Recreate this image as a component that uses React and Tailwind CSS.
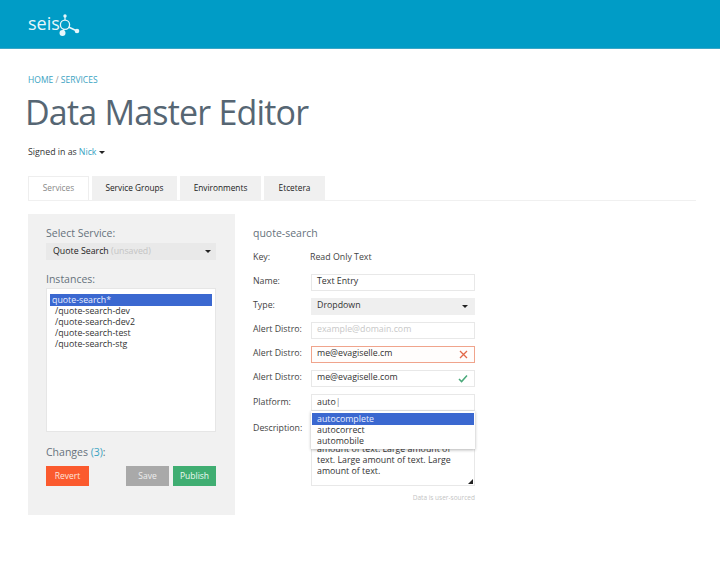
import React from 'react';

const font = { fontFamily: '"Open Sans", sans-serif' };

const Caret = ({ className = '' }) => (
  <span className={`inline-block w-0 h-0 border-x-[3px] border-x-transparent border-t-[3px] border-t-[#222] ${className}`} />
);

const Logo = () => (
  <div className="flex items-center">
    <span className="text-[18px] leading-none text-[#e6f6fb] -mt-[2px]">seis</span>
    <svg width="24" height="24" viewBox="0 0 24 24" className="-ml-[1px]">
      <circle cx="6" cy="12.7" r="4.6" fill="none" stroke="#e6f6fb" strokeWidth="1.3" />
      <line x1="6" y1="4" x2="6" y2="8" stroke="#e6f6fb" strokeWidth="1.2" />
      <line x1="5" y1="17" x2="4" y2="20" stroke="#e6f6fb" strokeWidth="1.4" />
      <line x1="9.5" y1="15" x2="18" y2="19" stroke="#e6f6fb" strokeWidth="1.5" />
      <circle cx="6" cy="4" r="1.7" fill="#e6f6fb" />
      <circle cx="3.5" cy="21" r="3" fill="#e6f6fb" />
      <circle cx="18" cy="19" r="2.3" fill="#e6f6fb" />
    </svg>
  </div>
);

const Tab = ({ children, active, width }) => (
  <div className={`h-[24px] flex items-center justify-center text-[8.3px] ${width} ${active ? 'bg-white text-[#888] border border-b-0 border-[#eee]' : 'bg-[#f0f0f0] text-[#222]'}`}>
    {children}
  </div>
);

const Row = ({ label, height = 'h-[24px]', children }) => (
  <div className={`flex items-center ${height}`}>
    <div className="w-[58px] text-[8.8px] text-[#444]">{label}</div>
    <div className="w-[164px]">{children}</div>
  </div>
);

const Box = ({ children, className = '' }) => (
  <div className={`h-[17px] flex items-center justify-between pl-[5px] pr-[6px] text-[8.8px] text-[#333] border ${className || 'bg-white border-[#e8e8e8]'}`}>
    {children}
  </div>
);

const instances = ['/quote-search-dev', '/quote-search-dev2', '/quote-search-test', '/quote-search-stg'];

export default function App() {
  return (
    <div className="w-[720px] h-[584px] bg-white overflow-hidden" style={font}>
      <header className="h-[49px] bg-[#009cc6] border-b border-[#3aa6c6] flex items-center pl-[28px]">
        <Logo />
      </header>

      <div className="pl-[28px] pr-[24px]">
        <div className="mt-[25px] text-[8.5px] leading-[12px] text-[#3aa3c2]">HOME <span className="text-[#999]">/</span> SERVICES</div>
        <h1 className="mt-[1px] -ml-[3px] text-[34px] leading-[50px] tracking-[-0.8px] text-[#566673] font-normal">Data Master Editor</h1>
        <div className="mt-[9px] text-[8.8px] leading-[12px] text-[#333] flex items-center">
          Signed in as <span className="text-[#3aa3c2] ml-[2px]">Nick</span>
          <Caret className="ml-[2px] border-t-[#3aa3c2]" />
        </div>

        <div className="mt-[18px] flex gap-[3px] border-b border-[#f0f0f0]">
          <Tab active width="w-[61px]">Services</Tab>
          <Tab width="w-[85px]">Service Groups</Tab>
          <Tab width="w-[81px]">Environments</Tab>
          <Tab width="w-[61px]">Etcetera</Tab>
        </div>

        <div className="mt-[13px] flex">
          <aside className="w-[207px] h-[301px] bg-[#f1f1f1] pt-[12px] pl-[18px] pr-[19px]">
            <div className="text-[10.5px] leading-[14px] text-[#66727c]">Select Service:</div>
            <div className="mt-[3px] h-[17px] bg-[#e9e9e9] flex items-center justify-between pl-[7px] pr-[5px] text-[8.8px] text-[#222]">
              <span>Quote Search <span className="text-[#c4c4c4]">(unsaved)</span></span>
              <Caret />
            </div>
            <div className="mt-[12px] text-[10.5px] leading-[14px] text-[#66727c]">Instances:</div>
            <div className="mt-[2px] h-[144px] bg-white border border-[#e6e6e6] pt-[5px] px-[3px] text-[8.8px] leading-[11px] text-[#333]">
              <div className="h-[12px] bg-[#3b68d0] text-[#e8eeff] leading-[12px] pl-[2px]">quote-search*</div>
              {instances.map((name) => (
                <div key={name} className="pl-[5px]">{name}</div>
              ))}
            </div>
            <div className="mt-[13px] text-[10.5px] leading-[14px] text-[#66727c]">
              Changes <span className="text-[#3aa3c2]">(3)</span>:
            </div>
            <div className="mt-[7px] flex text-[8.5px]">
              <button className="w-[43px] h-[20px] bg-[#fb5a2e] text-[#fde4dc]">Revert</button>
              <button className="ml-[37px] w-[43px] h-[20px] bg-[#a9a9a9] text-[#eee]">Save</button>
              <button className="ml-[4px] w-[43px] h-[20px] bg-[#40ae72] text-[#eefaf3]">Publish</button>
            </div>
          </aside>

          <section className="ml-[18px] w-[222px] relative">
            <div className="mt-[12px] text-[10.5px] leading-[14px] text-[#66727c]">quote-search</div>
            <div className="mt-[5px]">
              <Row label="Key:" height="h-[25px]"><span className="block -ml-[1px] text-[8.8px] text-[#444]">Read Only Text</span></Row>
              <Row label="Name:"><Box>Text Entry</Box></Row>
              <Row label="Type:">
                <Box className="bg-[#efefef] border-[#efefef]">Dropdown<Caret /></Box>
              </Row>
              <Row label="Alert Distro:"><Box><span className="text-[#c8c8c8]">example@domain.com</span></Box></Row>
              <Row label="Alert Distro:">
                <Box className="bg-[#fffdfc] border-[#f0a48c]">
                  me@evagiselle.cm
                  <svg width="9" height="9" viewBox="0 0 9 9"><path d="M1 1l7 7M8 1l-7 7" stroke="#e2694a" strokeWidth="1.3" /></svg>
                </Box>
              </Row>
              <Row label="Alert Distro:">
                <Box>
                  me@evagiselle.com
                  <svg width="10" height="9" viewBox="0 0 10 9"><path d="M1 5l2.6 2.6L9 1.5" fill="none" stroke="#4aa97a" strokeWidth="1.5" /></svg>
                </Box>
              </Row>
              <Row label="Platform:" height="h-[25px]"><Box><span>auto<span className="font-light">|</span></span></Box></Row>
              <div className="flex h-[78px]">
                <div className="w-[58px] pt-[7px] text-[8.8px] leading-[12px] text-[#444]">Description:</div>
                <div className="w-[164px] h-[74px] -mt-[3px] bg-white border border-[#e8e8e8] pl-[5px] pr-[6px] pb-[8px] flex flex-col justify-end text-[8.8px] leading-[11px] text-[#333] relative">
                  <div className="overflow-hidden h-[38px] flex flex-col justify-end">
                    <p>amount of text. Large amount of text. Large amount of text. Large amount of text.</p>
                  </div>
                  <svg width="5" height="5" viewBox="0 0 5 5" className="absolute right-[1px] bottom-[1px]"><path d="M5 0v5H0z" fill="#222" /></svg>
                </div>
              </div>
              <div className="w-[222px] text-right text-[6.5px] leading-[10px] text-[#c4c4c4]">Data is user-sourced</div>
            </div>

            {/* autocomplete menu over the description box */}
            <div className="absolute left-[58px] top-[197px] w-[164px] h-[38px] bg-white shadow-[0_1px_3px_rgba(0,0,0,0.3)] pt-[2px] px-[1px] text-[8.8px] leading-[11px] text-[#333]">
              <div className="h-[12px] bg-[#3b68d0] text-[#e8eeff] leading-[12px] pl-[5px]">autocomplete</div>
              <div className="pl-[5px]">autocorrect</div>
              <div className="pl-[5px]">automobile</div>
            </div>
          </section>
        </div>
      </div>
    </div>
  );
}
